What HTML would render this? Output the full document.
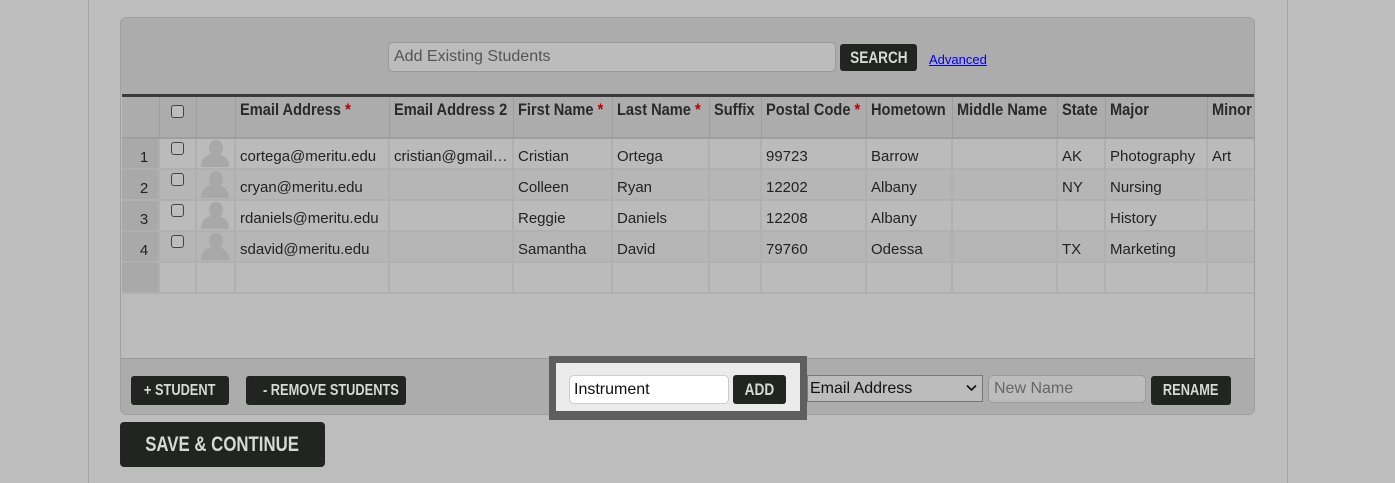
<!DOCTYPE html>
<html><head><style>
*{box-sizing:border-box;margin:0;padding:0}
body{width:1395px;height:483px;background:#bdbdbd;font-family:"Liberation Sans",sans-serif;position:relative;overflow:hidden}
.vl{position:absolute;top:0;height:483px;width:1px;background:#a5a5a5}
.panel{position:absolute;left:120px;top:17px;width:1135px;height:398px;border:1px solid #a0a0a0;border-radius:6px;background:#bcbcbc;overflow:hidden}
.top{position:absolute;left:0;top:0;width:1135px;height:76px;background:#acacac}
.c{display:inline-block;transform:scaleX(0.86);transform-origin:left center;font-weight:bold;white-space:nowrap}
.bc{display:inline-block;transform:scaleX(0.8);transform-origin:center center;font-weight:bold;white-space:nowrap}
.btn{position:absolute;background:#222422;color:#d8d8d8;border-radius:3px;text-align:center;font-size:16px;white-space:nowrap}
.inp{position:absolute;border:1px solid #9a9a9a;border-radius:5px;background:#bcbcbc;color:#555;font-size:16px;padding-left:5px}
table{position:absolute;left:1px;top:76px;border-collapse:collapse;table-layout:fixed;width:1133px}
th{height:42px;background:#acacac;border-top:3px solid #3a3a3a;border-right:1px solid #9e9e9e;border-bottom:2px solid #9e9e9e;text-align:left;vertical-align:top;padding:3px 0 0 4px;font-size:17px;color:#2a2a2a;white-space:nowrap;overflow:hidden}
td{height:31px;border:2px solid #b0b0b0;border-width:0 2px 2px 0;font-size:15px;color:#222;padding:6px 0 0 4px;white-space:nowrap;overflow:hidden}
tr.a td{background:#bbbbbb}tr.b td{background:#b6b6b6}
td.n{background:#a9a9a9!important;text-align:center;padding:8px 0 0 8px}
.req{color:#b00}
.cb{display:inline-block;width:13px;height:13px;border:1px solid #444;border-radius:3px;background:#bdbdbd}
.av{width:36px;height:28px;position:relative}
.av:before{content:"";position:absolute;left:12px;top:1px;width:14px;height:16px;border-radius:50%;background:#a8a8a8}
.av:after{content:"";position:absolute;left:4px;top:15px;width:28px;height:13px;border-radius:12px 12px 0 0;background:#a8a8a8}
.foot{position:absolute;left:0;top:340px;width:1135px;height:58px;background:#acacac;border-top:1px solid #9a9a9a}
</style></head><body>
<div class="vl" style="left:88px"></div><div class="vl" style="left:1287px"></div>
<div class="panel">
<div class="top"></div>
<div class="inp" style="left:267px;top:24px;width:448px;height:30px;line-height:28px">Add Existing Students</div>
<div class="btn" style="left:719px;top:26px;width:77px;height:27px;line-height:27px;font-size:17px"><span class="bc">SEARCH</span></div>
<a style="position:absolute;left:808px;top:34px;font-size:13px;color:#0000ee;text-decoration:underline">Advanced</a>
<table>
<colgroup><col style="width:37px"><col style="width:37px"><col style="width:39px"><col style="width:154px"><col style="width:124px"><col style="width:99px"><col style="width:97px"><col style="width:52px"><col style="width:105px"><col style="width:86px"><col style="width:105px"><col style="width:48px"><col style="width:102px"><col style="width:48px"></colgroup>
<tr><th></th><th style="padding:6px 0 0 11px"><span class="cb"></span></th><th></th><th><span class="c">Email Address <span class="req">*</span></span></th><th><span class="c">Email Address 2</span></th><th><span class="c">First Name <span class="req">*</span></span></th><th><span class="c">Last Name <span class="req">*</span></span></th><th><span class="c">Suffix</span></th><th><span class="c">Postal Code <span class="req">*</span></span></th><th><span class="c">Hometown</span></th><th><span class="c">Middle Name</span></th><th><span class="c">State</span></th><th><span class="c">Major</span></th><th><span class="c">Minor</span></th></tr>
<tr class="a"><td class="n">1</td><td style="padding:3px 0 0 11px;vertical-align:top"><span class="cb"></span></td><td style="padding:0"><div class="av"></div></td><td>cortega@meritu.edu</td><td>cristian@gmail…</td><td>Cristian</td><td>Ortega</td><td></td><td>99723</td><td>Barrow</td><td></td><td>AK</td><td>Photography</td><td>Art</td></tr>
<tr class="b"><td class="n">2</td><td style="padding:3px 0 0 11px;vertical-align:top"><span class="cb"></span></td><td style="padding:0"><div class="av"></div></td><td>cryan@meritu.edu</td><td></td><td>Colleen</td><td>Ryan</td><td></td><td>12202</td><td>Albany</td><td></td><td>NY</td><td>Nursing</td><td></td></tr>
<tr class="a"><td class="n">3</td><td style="padding:3px 0 0 11px;vertical-align:top"><span class="cb"></span></td><td style="padding:0"><div class="av"></div></td><td>rdaniels@meritu.edu</td><td></td><td>Reggie</td><td>Daniels</td><td></td><td>12208</td><td>Albany</td><td></td><td></td><td>History</td><td></td></tr>
<tr class="b"><td class="n">4</td><td style="padding:3px 0 0 11px;vertical-align:top"><span class="cb"></span></td><td style="padding:0"><div class="av"></div></td><td>sdavid@meritu.edu</td><td></td><td>Samantha</td><td>David</td><td></td><td>79760</td><td>Odessa</td><td></td><td>TX</td><td>Marketing</td><td></td></tr>
<tr class="a"><td class="n"></td><td></td><td></td><td></td><td></td><td></td><td></td><td></td><td></td><td></td><td></td><td></td><td></td><td></td></tr>
</table>
<div class="foot"></div>
<div class="btn" style="left:10px;top:358px;width:98px;height:29px;line-height:29px"><span class="bc">+ STUDENT</span></div>
<div class="btn" style="left:125px;top:358px;width:160px;height:29px;line-height:29px"><span class="bc">- REMOVE STUDENTS</span></div>
<div style="position:absolute;left:686px;top:357px;width:176px;height:27px;border:1px solid #777;background:#bcbcbc;font-size:16px;padding-left:2px;line-height:25px;color:#111">Email Address<svg style="position:absolute;right:5px;top:8px" width="11" height="8" viewBox="0 0 11 8"><path d="M1 1.5L5.5 6 10 1.5" fill="none" stroke="#111" stroke-width="1.6"/></svg></div>
<div class="inp" style="left:867px;top:357px;width:158px;height:28px;line-height:26px;color:#666">New Name</div>
<div class="btn" style="left:1030px;top:358px;width:80px;height:29px;line-height:29px"><span class="bc">RENAME</span></div>
</div>
<div style="position:absolute;left:549px;top:356px;width:258px;height:64px;background:#5e5e5e"></div>
<div style="position:absolute;left:556px;top:363px;width:244px;height:48px;background:#ebebeb"></div>
<div style="position:absolute;left:569px;top:375px;width:160px;height:29px;border:1px solid #ccc;border-radius:5px;background:#fff;font-size:16px;line-height:27px;padding-left:4px;color:#111">Instrument</div>
<div class="btn" style="left:733px;top:375px;width:53px;height:29px;line-height:29px;font-size:17px"><span class="bc">ADD</span></div>
<div class="btn" style="left:120px;top:422px;width:205px;height:45px;line-height:45px;font-size:21px;border-radius:4px"><span class="bc">SAVE &amp; CONTINUE</span></div>
</body></html>
